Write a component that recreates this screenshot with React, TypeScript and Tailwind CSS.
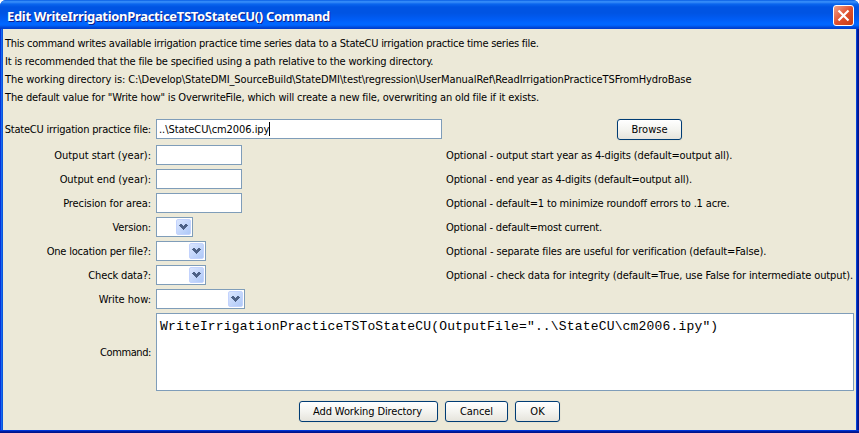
import type { ReactNode } from "react";

const INTRO = [
  {
    text: "This command writes available irrigation practice time series data to a StateCU irrigation practice time series file.",
    tracking: "tracking-[-0.262px]",
  },
  {
    text: "It is recommended that the file be specified using a path relative to the working directory.",
    tracking: "tracking-[-0.187px]",
  },
  {
    text: "The working directory is: C:\\Develop\\StateDMI_SourceBuild\\StateDMI\\test\\regression\\UserManualRef\\ReadIrrigationPracticeTSFromHydroBase",
    tracking: "tracking-[-0.093px]",
  },
  {
    text: 'The default value for "Write how" is OverwriteFile, which will create a new file, overwriting an old file if it exists.',
    tracking: "tracking-[-0.162px]",
  },
];

function Row({
  label,
  labelClass = "",
  note,
  noteClass = "",
  children,
}: {
  label: string;
  labelClass?: string;
  note?: string;
  noteClass?: string;
  children: ReactNode;
}) {
  return (
    <div className="flex h-5 items-center">
      <div className={"w-[148px] shrink-0 pt-[2px] text-right " + labelClass}>{label}</div>
      <div className="ml-[5px] w-[290px] shrink-0">{children}</div>
      {note && <div className={"pt-[2px] " + noteClass}>{note}</div>}
    </div>
  );
}

function TextBox() {
  return <input className="block h-5 w-[86px] border border-[#7f9db9] bg-white outline-none" />;
}

function Combo({ width }: { width: string }) {
  return (
    <div className={"flex h-5 justify-end border border-[#7f9db9] bg-white p-px " + width}>
      <div className="flex h-4 w-[15px] items-center justify-center rounded-[2px] border border-[#c3d3fd] bg-linear-to-br from-[#dbe6fe] to-[#aec8f7]">
        <svg width="9" height="6" viewBox="0 0 9 6" shapeRendering="crispEdges" fill="#4d6185">
          <path d="M1 0h2v1h1v1h1v-1h1v-1h2v1h1v1h-1v1h-1v1h-1v1h-1v1h-1v-1h-1v-1h-1v-1h-1v-1h-1v-1h1z" />
        </svg>
      </div>
    </div>
  );
}

function Button({ className, children }: { className: string; children: string }) {
  return (
    <button
      className={
        "flex h-[21px] items-center justify-center rounded-[3px] border border-[#003c74] bg-linear-to-b from-white via-[#f4f4f0] to-[#e6e4dc] shadow-[0_0_0_1px_#e6e3d3] " +
        className
      }
    >
      {children}
    </button>
  );
}

export default function App() {
  return (
    <div className="h-[433px] w-[859px] bg-white font-['DejaVu_Sans_Condensed','DejaVu_Sans',sans-serif] text-[11px] leading-[18px] whitespace-nowrap text-black">
      <div className="flex h-full flex-col overflow-hidden rounded-t-[6px] bg-[#0344dc]">
        <header className="flex h-[29px] shrink-0 items-center justify-between bg-[linear-gradient(180deg,#0050dc_0px,#2a86f8_1px,#3a8ef8_2px,#0a66ee_4px,#0054e3_7px,#0054e3_13px,#005cf4_19px,#0066ff_23px,#0066ff_25px,#005bf0_26px,#0042cf_28px,#003dd0_29px)] pr-[5px] pl-[7px]">
          <h1 className="mt-[3px] font-['Noto_Sans',sans-serif] text-[13px] font-bold tracking-[-0.322px] text-white [text-shadow:1px_1px_0_#0f1f8c]">
            Edit WriteIrrigationPracticeTSToStateCU() Command
          </h1>
          <button className="mt-[2px] flex size-[21px] items-center justify-center rounded-[3px] border border-white bg-linear-to-br from-[#f0a088] via-[#e0502e] to-[#c83c10]">
            <svg width="13" height="13" viewBox="0 0 13 13" stroke="#fff" strokeWidth="2.2">
              <path d="M1.5 1.5l10 10M11.5 1.5l-10 10" />
            </svg>
          </button>
        </header>

        <div className="flex min-h-0 flex-1 border-b border-[#0036d8]">
          <div className="w-[3px] shrink-0 bg-[linear-gradient(90deg,#0831d9_1px,#166aee_1px,#166aee_2px,#0855dd_2px)]" />
          <main className="flex-1 bg-[#ece9d8] pt-[6px]">
            {INTRO.map((line) => (
              <p key={line.text} className={"h-[18px] pl-[2px] " + line.tracking}>
                {line.text}
              </p>
            ))}

            <div className="mt-3 flex h-5 items-center">
              <div className="w-[148px] shrink-0 pt-[2px] text-right tracking-[-0.2px]">
                StateCU irrigation practice file:
              </div>
              <div className="ml-[5px] flex h-5 w-[286px] shrink-0 items-center border border-[#7f9db9] bg-white pl-[2px] tracking-[-0.06px]">
                <span className="pt-[2px]">..\StateCU\cm2006.ipy</span>
                <span className="h-[14px] w-px bg-black" />
              </div>
              <Button className="mt-px ml-[175px] w-[65px]">Browse</Button>
            </div>

            <div className="mt-[6px] flex flex-col gap-1">
              <Row
                label="Output start (year):"
                note="Optional - output start year as 4-digits (default=output all)."
                noteClass="tracking-[-0.135px]"
              >
                <TextBox />
              </Row>
              <Row
                label="Output end (year):"
                labelClass="tracking-[-0.06px]"
                note="Optional - end year as 4-digits (default=output all)."
                noteClass="tracking-[-0.16px]"
              >
                <TextBox />
              </Row>
              <Row
                label="Precision for area:"
                labelClass="tracking-[-0.08px]"
                note="Optional - default=1 to minimize roundoff errors to .1 acre."
                noteClass="tracking-[-0.155px]"
              >
                <TextBox />
              </Row>
              <Row
                label="Version:"
                labelClass="tracking-[-0.15px]"
                note="Optional - default=most current."
                noteClass="tracking-[-0.17px]"
              >
                <Combo width="w-[37px]" />
              </Row>
              <Row
                label="One location per file?:"
                labelClass="tracking-[-0.2px]"
                note="Optional - separate files are useful for verification (default=False)."
                noteClass="tracking-[-0.115px]"
              >
                <Combo width="w-[50px]" />
              </Row>
              <Row
                label="Check data?:"
                labelClass="tracking-[-0.15px]"
                note="Optional - check data for integrity (default=True, use False for intermediate output)."
                noteClass="tracking-[-0.115px]"
              >
                <Combo width="w-[50px]" />
              </Row>
              <Row label="Write how:">
                <Combo width="w-[89px]" />
              </Row>
            </div>

            <div className="mt-1 flex h-[78px] items-center">
              <div className="w-[148px] shrink-0 pt-px text-right tracking-[-0.4px]">Command:</div>
              <div className="ml-[5px] h-full w-[698px] border border-[#7f9db9] bg-white pt-[4px] pl-[3px] font-['Liberation_Mono',monospace] text-[13px] leading-[18px] tracking-[0.175px]">
                {'WriteIrrigationPracticeTSToStateCU(OutputFile="..\\StateCU\\cm2006.ipy")'}
              </div>
            </div>

            <div className="mt-[10px] flex gap-[7px] pl-[296px]">
              <Button className="w-[139px] pr-[2px] tracking-[-0.11px]">Add Working Directory</Button>
              <Button className="w-[63px] tracking-[-0.09px]">Cancel</Button>
              <Button className="w-[45px] tracking-[0.2px]">OK</Button>
            </div>
          </main>
          <div className="w-[3px] shrink-0 bg-[linear-gradient(90deg,#0441d8_1px,#001ea0_1px,#001ea0_2px,#00138c_2px)]" />
        </div>
        <div className="h-[2px] shrink-0 bg-[linear-gradient(180deg,#001ea0_1px,#00138c_1px)]" />
      </div>
    </div>
  );
}
